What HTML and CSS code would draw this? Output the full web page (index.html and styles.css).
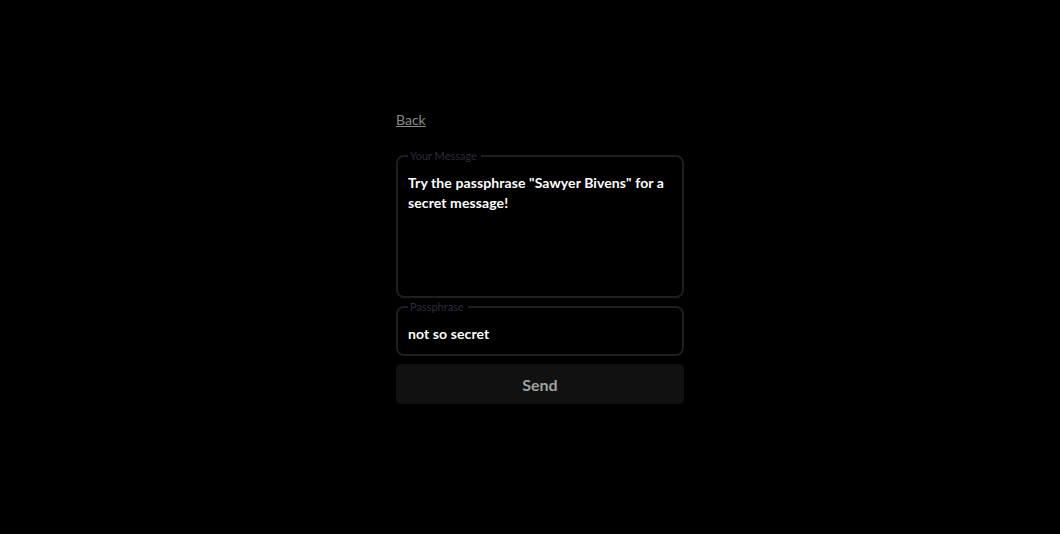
FILE: index.html
```html
<!DOCTYPE html>
<html lang="en">

<head>
    <meta charset="UTF-8">
    <meta name="viewport" content="width=device-width, initial-scale=1.0">
    <title>Send a Message</title>
    <link rel="stylesheet" href="styles.css">
</head>

<body>
    <div class="container">
        <a href="#" class="back-link">Back</a>

        <form class="message-form">
            <fieldset class="field">
                <legend>Your Message</legend>
                <textarea class="input message-input">Try the passphrase "Sawyer Bivens" for a secret message!</textarea>
            </fieldset>

            <fieldset class="field">
                <legend>Passphrase</legend>
                <input type="text" class="input" value="not so secret">
            </fieldset>

            <button type="button" class="send-button">Send</button>
        </form>
    </div>
</body>

</html>
```

FILE: styles.css
```css
body {
    font-family: "Lato", "Noto Sans", sans-serif;
    background-color: #000;
    color: #fff;
    margin: 0;
    padding: 109px 0 0;
}

.container {
    width: 308px;
    margin: 0 auto;
    padding-left: 20px;
    box-sizing: border-box;
}

.back-link {
    display: inline-block;
    color: #8a8a8a;
    font-size: 14px;
    line-height: 20px;
    text-decoration: underline;
}

.message-form {
    display: flex;
    flex-direction: column;
    margin-top: 19px;
}

.field {
    margin: 0 0 2px;
    padding: 0 10px 0;
    border: 2px solid #1e1e1e;
    border-radius: 8px;
    min-width: 0;
}

.field legend {
    padding: 0 4px 0 2px;
    font-size: 11px;
    line-height: 13px;
    color: #2c2c3c;
}

.input {
    display: block;
    width: 100%;
    margin: 0;
    padding: 0;
    border: none;
    outline: none;
    background: transparent;
    color: #fff;
    font-family: inherit;
    font-size: 14px;
    font-weight: bold;
    letter-spacing: 0.1px;
    line-height: 20px;
    box-sizing: border-box;
}

.message-input {
    height: 123px;
    margin-top: 11px;
    resize: none;
}

input.input {
    height: 20px;
    margin: 11px 0 10px;
}

.send-button {
    margin-top: 6px;
    height: 40px;
    border: none;
    border-radius: 5px;
    background-color: #111;
    color: #a0a0a0;
    font-family: inherit;
    font-size: 16px;
    font-weight: bold;
    cursor: pointer;
}
```
